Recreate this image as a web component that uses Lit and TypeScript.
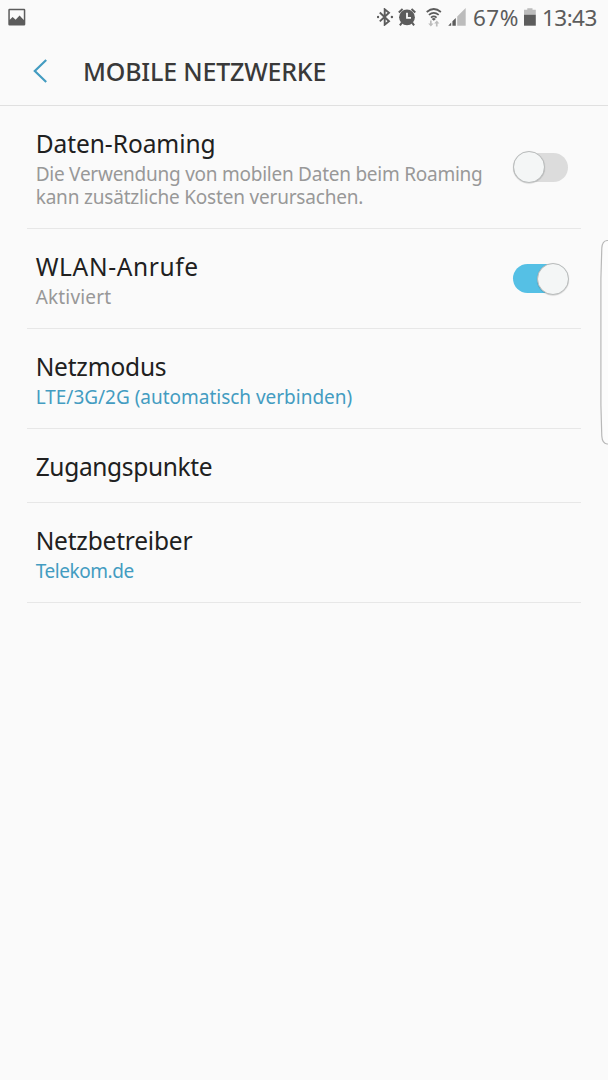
import { LitElement, html, css, nothing } from "lit";
import { customElement, property } from "lit/decorators.js";
import { styleMap } from "lit/directives/style-map.js";

interface Label {
  text: string;
  spacing: number;
}

interface Row {
  title: Label;
  lines?: Label[];
  value?: boolean;
  on?: boolean;
}

const rows: Row[] = [
  {
    title: { text: "Daten-Roaming", spacing: -0.05 },
    on: false,
    lines: [
      { text: "Die Verwendung von mobilen Daten beim Roaming", spacing: -0.25 },
      { text: "kann zusätzliche Kosten verursachen.", spacing: -0.19 },
    ],
  },
  { title: { text: "WLAN-Anrufe", spacing: 0.64 }, on: true, lines: [{ text: "Aktiviert", spacing: 0.18 }] },
  {
    title: { text: "Netzmodus", spacing: -0.2 },
    value: true,
    lines: [{ text: "LTE/3G/2G (automatisch verbinden)", spacing: -0.02 }],
  },
  { title: { text: "Zugangspunkte", spacing: -0.34 } },
  { title: { text: "Netzbetreiber", spacing: -0.2 }, value: true, lines: [{ text: "Telekom.de", spacing: -0.45 }] },
];

const spaced = (label: Label) => styleMap({ letterSpacing: `${label.spacing}px` });

@customElement("toggle-switch")
class ToggleSwitch extends LitElement {
  @property({ type: Boolean }) on = false;

  static styles = css`
    :host { display: block; flex: none; }
    .track {
      width: 55px; height: 29px; border-radius: 15px; background: #dcdcdc;
      display: flex; align-items: center;
    }
    .track.on { background: #55c0e5; justify-content: flex-end; }
    .knob {
      box-sizing: border-box; flex: none; width: 32px; height: 32px; border-radius: 50%;
      background: #f4f6f6; border: 1px solid #b9bcbc; box-shadow: 0 0.5px 1px rgba(0, 0, 0, 0.2);
    }
    .on .knob { margin-right: -1px; }
  `;

  render() {
    return html`<div class="track ${this.on ? "on" : ""}"><div class="knob"></div></div>`;
  }
}

@customElement("status-bar")
class StatusBar extends LitElement {
  static styles = css`
    :host {
      display: flex; align-items: center; box-sizing: border-box; height: 34px; padding-left: 8px;
      color: #5c5c5c; font-size: 22.5px; line-height: 34px;
    }
    svg { display: block; flex: none; fill: #5c5c5c; }
    .grow { flex: 1; }
    .bluetooth { margin-right: 4px; }
    .alarm { margin-right: 9px; }
    .wifi { margin-right: 6px; }
    .signal { margin-right: 7px; }
    .stroke { fill: none; stroke: #5c5c5c; }
    .pale { fill: #bcbcbc; }
    .percent { width: 51px; padding-top: 2px; letter-spacing: 0.5px; white-space: nowrap; }
    .clock { width: 66px; margin-left: 6px; padding-top: 2px; letter-spacing: -0.55px; }
  `;

  render() {
    return html`
      <svg width="18" height="18" viewBox="0 0 18 18">
        <path fill-rule="evenodd" d="M1.5 0.8h14.6q1.2 0 1.2 1.2v14.2q0 1.2-1.2 1.2H1.5q-1.2 0-1.2-1.2V2q0-1.2 1.2-1.2zM1.8 2.2v9.6l2.8-2.9 1.4 1.3 1.6 1.5 4-4.2 1.8 2 2.4 2.4V2.2z" />
      </svg>
      <div class="grow"></div>
      <svg class="bluetooth" width="17" height="18" viewBox="0 0 17 18">
        <path class="stroke" stroke-width="1.9" d="M2.8 4.5l9.2 8.7L7.7 16.7V1.3L12 4.8l-9.2 8.6" />
        <circle cx="1" cy="9" r="1.2" />
        <circle cx="14.9" cy="9" r="1.2" />
      </svg>
      <svg class="alarm" width="19" height="18" viewBox="0 0 19 18">
        <circle cx="9" cy="9.3" r="7.9" />
        <path class="stroke" stroke-width="2" d="M0.8 4.4L4.6 1M17.3 4.4L13.5 1" />
        <path class="stroke" stroke-width="2" d="M3.9 14.6L1.9 17.4M14.1 14.6l2 2.8" />
        <path fill="none" stroke="#fafafa" stroke-width="1.8" d="M9 4.8v5h4" />
      </svg>
      <svg class="wifi" width="16" height="19" viewBox="0 0 16 19">
        <path class="stroke" stroke-width="1.7" d="M0.7 4q7.1-6 14.2 0M2.9 6.9q4.9-4.2 9.8 0M5 9.6q2.8-2.4 5.6 0" />
        <path d="M5.7 10.9q2.1-1.8 4.2 0L7.8 12.8z" />
        <path class="pale" d="M4 12.6h1.7v3h1.8L4.9 18.6 2.2 15.6H4zM9.9 18.4h1.7v-3h1.8l-2.6-3-2.7 3h1.8z" />
      </svg>
      <svg class="signal" width="18" height="18" viewBox="0 0 18 18">
        <path d="M0.2 17.7L3.2 14.6v3.1zM4.4 17.7v-4.4L7.8 9.9v7.8z" />
        <path class="pale" d="M9.2 17.7V8.5L17.7 0v17.7z" />
      </svg>
      <span class="percent">67%</span>
      <svg width="12" height="18" viewBox="0 0 12 18">
        <path class="pale" d="M3.3 0.3h5.2v1.5h3.3V7H0V1.8h3.3z" />
        <path d="M0 6.8h11.8v10.9H0z" />
      </svg>
      <span class="clock">13:43</span>
    `;
  }
}

@customElement("app-root")
class AppRoot extends LitElement {
  static styles = css`
    :host {
      display: block; position: relative; height: 1080px; overflow: hidden; background: #fafafa;
      font-family: "Noto Sans", sans-serif; color: #202020;
    }
    .bar {
      box-sizing: border-box; height: 72px; padding: 2px 0 0 33px; border-bottom: 1px solid #e0e0e0;
      display: flex; align-items: center;
    }
    .back { display: block; flex: none; }
    h1 {
      margin: 0 0 0 36px; font-size: 25px; line-height: 34px; font-weight: 500; color: #393939;
      letter-spacing: -0.19px; white-space: nowrap;
    }
    .list { margin: 0 27px; }
    .row {
      display: flex; align-items: center; justify-content: space-between;
      padding-right: 13px; padding-left: 8.7px; border-bottom: 1px solid #e7e7e7;
    }
    .text { padding: 21px 0 19px; white-space: nowrap; }
    .text.single { padding-bottom: 18px; }
    .title { font-size: 24.5px; line-height: 34px; }
    .subs { margin-top: 2px; font-size: 19px; line-height: 23px; color: #989898; }
    .subs.value { color: #439cc1; }
    .edge { position: absolute; top: 239px; right: 0; }
  `;

  render() {
    return html`
      <status-bar></status-bar>
      <div class="bar">
        <svg class="back" width="14" height="24" viewBox="0 0 14 24">
          <path fill="none" stroke="#439cc1" stroke-width="2.2" d="M13.2 1L1.8 12l11.4 11" />
        </svg>
        <h1>MOBILE NETZWERKE</h1>
      </div>
      <div class="list">
        ${rows.map(
          (row) => html`
            <div class="row">
              <div class="text ${row.lines ? "" : "single"}">
                <div class="title" style=${spaced(row.title)}>${row.title.text}</div>
                ${row.lines
                  ? html`<div class="subs ${row.value ? "value" : ""}">
                      ${row.lines.map((line) => html`<div style=${spaced(line)}>${line.text}</div>`)}
                    </div>`
                  : nothing}
              </div>
              ${row.on === undefined ? nothing : html`<toggle-switch ?on=${row.on}></toggle-switch>`}
            </div>
          `,
        )}
      </div>
      <svg class="edge" width="8" height="207" viewBox="0 0 8 207">
        <path fill="#fcfcfc" stroke="#b8b8b8" stroke-width="1.2" d="M9 1.5H7Q2.3 2 1.8 9L0.9 40V166L1.8 197q0.5 7.5 5.2 8H9" />
      </svg>
    `;
  }
}
